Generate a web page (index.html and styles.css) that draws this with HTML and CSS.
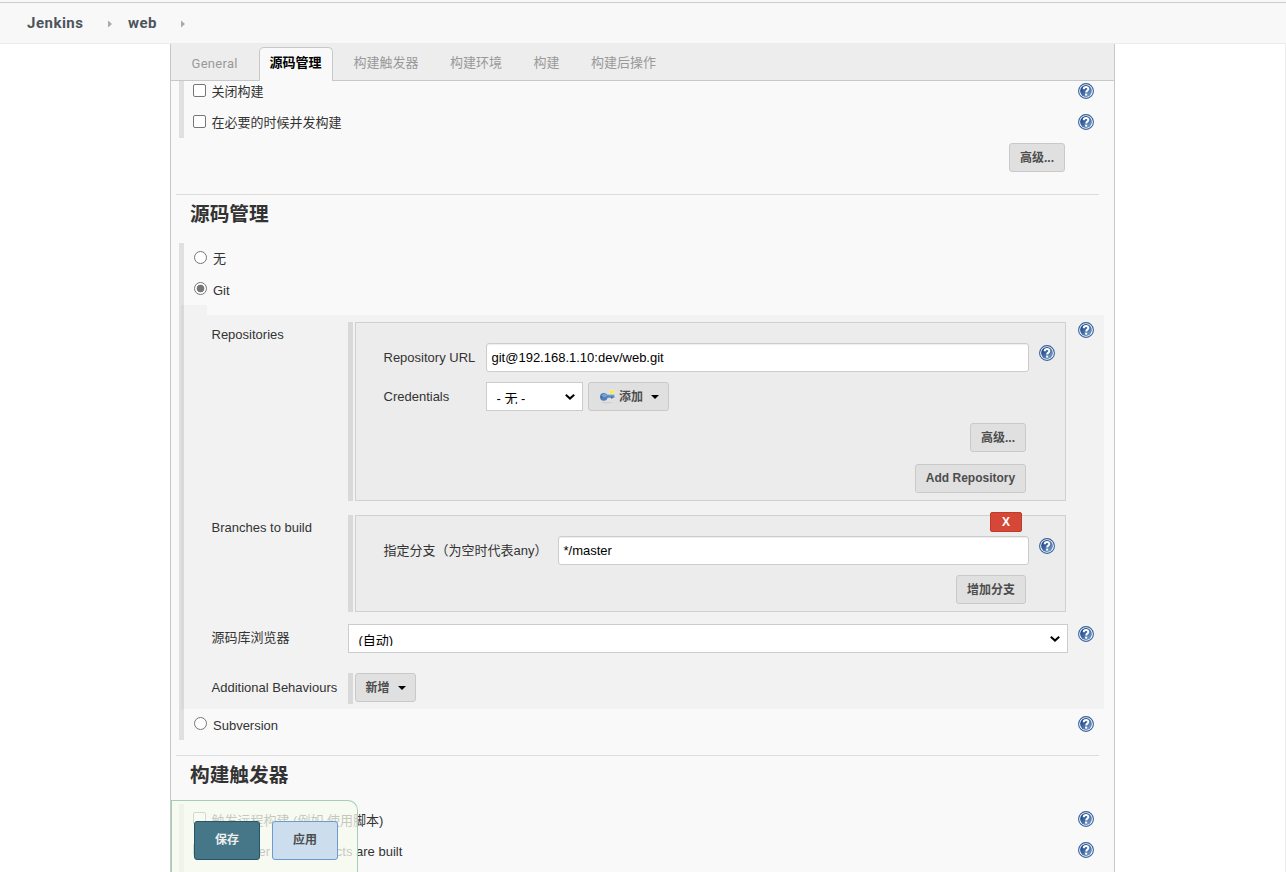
FILE: index.html
```html
<!DOCTYPE html>
<html lang="zh-CN">
<head>
<meta charset="utf-8">
<title>web Config [Jenkins]</title>
<link rel="stylesheet" href="styles.css">
</head>
<body>
<svg class="defs" width="0" height="0">
  <defs>
    <linearGradient id="blue" x1="0" y1="0" x2="1" y2="1"><stop offset="0.2" stop-color="#1f4c8a"/><stop offset="1" stop-color="#86a8d2"/></linearGradient>
    <symbol id="help" viewBox="0 0 16 16">
      <circle cx="8" cy="8" r="7.4" fill="#fff" stroke="#345f9c" stroke-width="1.1"/>
      <circle cx="8" cy="8" r="5.9" fill="url(#blue)"/>
      <path d="M5.7 6.2C5.8 3.2 10.4 3.3 10.3 6C10.2 7.6 8.2 7.7 8.2 9.6" fill="none" stroke="#fff" stroke-width="2"/>
      <rect x="7.1" y="10.6" width="2.1" height="2" fill="#fff"/>
    </symbol>
    <symbol id="chev" viewBox="0 0 10 6"><path d="M0.8 0.8L5 4.6L9.2 0.8" fill="none" stroke="#000" stroke-width="2"/></symbol>
    <symbol id="caret" viewBox="0 0 8 4"><path d="M0 0H8L4 4Z"/></symbol>
    <symbol id="crumb" viewBox="0 0 4 8"><path d="M0 0.5L4 4L0 7.5Z" fill="#aaa"/></symbol>
  </defs>
</svg>

<header class="crumbs">
  <a class="crumb-home">Jenkins</a>
  <svg class="sep"><use href="#crumb"/></svg>
  <a class="crumb-job">web</a>
  <svg class="sep sep-last"><use href="#crumb"/></svg>
</header>

<main class="page">
  <div class="panel">
    <nav class="tabs">
      <a class="tab">General</a>
      <a class="tab active">源码管理</a>
      <a class="tab">构建触发器</a>
      <a class="tab">构建环境</a>
      <a class="tab">构建</a>
      <a class="tab">构建后操作</a>
    </nav>

    <section class="block block-general">
      <div class="row"><span class="check"></span><label>关闭构建</label><svg class="help"><use href="#help"/></svg></div>
      <div class="row"><span class="check"></span><label>在必要的时候并发构建</label><svg class="help"><use href="#help"/></svg></div>
    </section>
    <div class="advanced"><button class="btn adv">高级...</button></div>

    <h2 class="title">源码管理</h2>
    <section class="block">
      <div class="row radio-row"><span class="radio"></span><label>无</label></div>
      <div class="row radio-row latin"><span class="radio on"></span><label>Git</label></div>
      <div class="nub"></div>
      <div class="git">
        <div class="field">
          <div class="name">Repositories</div>
          <div class="bar">
            <div class="box repo-box">
              <div class="line">
                <div class="key">Repository URL</div>
                <div class="input">git@192.168.1.10:dev/web.git</div>
                <svg class="help"><use href="#help"/></svg>
              </div>
              <div class="line cred">
                <div class="key">Credentials</div>
                <div class="select small"><span>- 无 -</span><svg><use href="#chev"/></svg></div>
                <button class="btn add">
                  <svg class="key-icon" viewBox="0 0 16 16">
                    <ellipse cx="8" cy="13.6" rx="5.5" ry="0.7" fill="#ccc"/>
                    <path d="M13 0.5V5.5M10.5 3H15.5" stroke="#fff27a" stroke-width="2.5"/>
                    <circle cx="12.8" cy="3" r="1.6" fill="#f7e64b"/>
                    <rect x="7" y="5.7" width="8.3" height="2.5" fill="#6a96cc"/>
                    <path d="M7 7.8H15.5V8.6H13.5V9.6H12V8.6H7Z" fill="#33659f"/>
                    <ellipse cx="4.8" cy="7.8" rx="3.8" ry="3.9" fill="#4f80bb"/>
                    <ellipse cx="5.5" cy="6.5" rx="2.5" ry="1.8" fill="#7aa3d4"/>
                    <circle cx="2.6" cy="8" r="0.8" fill="#315e9b"/>
                  </svg>
                  <span>添加</span><svg class="caret"><use href="#caret"/></svg>
                </button>
              </div>
              <div class="end first"><button class="btn adv">高级...</button></div>
              <div class="end second"><button class="btn add-repo">Add Repository</button></div>
            </div>
          </div>
          <svg class="help"><use href="#help"/></svg>
        </div>
        <div class="field branches">
          <div class="name">Branches to build</div>
          <div class="bar">
            <div class="box branch-box">
              <button class="delete">X</button>
              <div class="line">
                <div class="key wide">指定分支（为空时代表any）</div>
                <div class="input">*/master</div>
                <svg class="help"><use href="#help"/></svg>
              </div>
              <div class="end branch-end"><button class="btn add-branch">增加分支</button></div>
            </div>
          </div>
        </div>
        <div class="field browser">
          <div class="name">源码库浏览器</div>
          <div class="select"><span>(自动)</span><svg><use href="#chev"/></svg></div>
          <svg class="help"><use href="#help"/></svg>
        </div>
        <div class="field behaviours">
          <div class="name">Additional Behaviours</div>
          <div class="bar"><button class="btn new"><span>新增</span><svg class="caret"><use href="#caret"/></svg></button></div>
        </div>
      </div>
      <div class="row radio-row latin"><span class="radio"></span><label>Subversion</label><svg class="help"><use href="#help"/></svg></div>
    </section>

    <h2 class="title title-triggers">构建触发器</h2>
    <section class="block block-triggers">
      <div class="row latin"><span class="check"></span><label>触发远程构建 (例如,使用脚本)</label><svg class="help"><use href="#help"/></svg></div>
      <div class="row latin"><span class="check"></span><label>Build after other projects are built</label><svg class="help"><use href="#help"/></svg></div>
    </section>

    <div class="savebar">
      <button class="save">保存</button>
      <button class="apply">应用</button>
    </div>
  </div>
</main>
</body>
</html>
```
FILE: styles.css
```css
* { box-sizing: border-box; }
body {
  margin: 0;
  height: 872px;
  overflow: hidden;
  background: #fff;
  color: #333;
  font: 13px/20px "Liberation Sans", "Noto Sans CJK SC", sans-serif;
}
button { margin: 0; padding: 0; font-family: inherit; }
svg { display: block; flex: none; }
.defs { position: absolute; }

.crumbs {
  display: flex;
  align-items: center;
  height: 44px;
  padding: 2px 0 0 27px;
  background: linear-gradient(#f8f8f8 2px, #ccc 2px, #ccc 3px, #f8f8f8 3px);
  border-bottom: 1px solid #ececec;
  color: #4d545d;
  font: bold 15px/20px Roboto, sans-serif;
  letter-spacing: 0.5px;
}
.crumb-home { width: 81px; }
.crumb-job { width: 49px; margin-left: 15px; padding-left: 1px; }
.sep { width: 4px; height: 8px; margin-top: 2px; }
.sep-last { margin-left: 5px; }

.page { height: 828px; border-right: 1px solid #eee; }
.panel {
  position: relative;
  width: 945px;
  height: 100%;
  margin-left: 170px;
  overflow: hidden;
  background: #f9f9f9;
  border: solid #c8c8c8;
  border-width: 0 1px;
}

.tabs {
  display: flex;
  height: 37px;
  padding: 3px 0 0 10px;
  background: #ededed;
  border-bottom: 1px solid #c8c8c8;
  color: #999;
  font-family: Roboto, "Noto Sans CJK SC", sans-serif;
}
.tab { height: 34px; padding: 6px 11px 0 10.5px; margin-right: 10px; line-height: 19px; white-space: nowrap; }
.tab:first-child { width: 78px; margin-right: 0; padding: 7px 0 0 10.5px; letter-spacing: 0.3px; }
.tab.active {
  width: 74px;
  padding: 5px 0 0 9.5px;
  background: #f9f9f9;
  border: 1px solid #c8c8c8;
  border-bottom: 0;
  border-radius: 5px 5px 0 0;
  color: #000;
  font-weight: bold;
}

.block { margin: 0 10px 0 8px; border-left: 5px solid #e0e0e0; }
.block-general { height: 57px; overflow: hidden; }
.block-general .row:first-child { margin-top: -5px; }
.row { display: flex; height: 31px; padding: 6px 10px 0 9px; align-items: flex-start; }
.row label { flex: 1; margin-left: 5.5px; white-space: nowrap; }
.row.latin label { padding-top: 1px; }
.help { width: 16px; height: 16px; margin-top: 1px; }
.check, .radio { flex: none; width: 13px; height: 13px; margin-top: 2px; background: #fff; border: 1px solid #767676; border-radius: 2px; }
.radio { border-radius: 50%; }
.radio.on { background: radial-gradient(circle, #767676 3.5px, #fff 4.2px); }
.radio-row { padding-left: 10px; }
.radio-row label { margin-left: 6px; }

.btn {
  display: flex;
  align-items: center;
  justify-content: center;
  height: 29px;
  padding-bottom: 3px;
  background: #e0e0e0;
  border: 1px solid #c9c9c9;
  border-radius: 3px;
  color: #4d4d4d;
  font-size: 12px;
  font-weight: bold;
  white-space: nowrap;
}
.adv { width: 56px; }
.advanced { display: flex; justify-content: flex-end; height: 56px; padding: 5px 49px 0 0; }

.title {
  height: 49px;
  margin: 0 15px 0 5px;
  padding: 4px 0 0 14px;
  border-top: 1px solid #ddd;
  font-size: 19.7px;
  line-height: 31px;
}
.nub { width: 26px; height: 10px; margin-left: -3px; background: rgba(0, 0, 0, 0.028); }
.git { height: 394px; margin-left: -3px; padding: 7px 10px 0 30px; background: rgba(0, 0, 0, 0.028); }
.field { display: flex; align-items: flex-start; }
.name { width: 137px; padding: 3px 0 0 0.5px; white-space: nowrap; }
.bar { width: 718px; padding-left: 2px; border-left: 5px solid #d9d9d9; }
.field > .help { margin: 0 0 0 12px; }

.box { position: relative; width: 711px; background: #ececec; border: 1px solid #d0d0d0; padding: 20px 10px 0 28px; }
.repo-box { height: 179px; }
.branch-box { height: 97px; }
.line { display: flex; align-items: flex-start; }
.line .help { margin: 2px 0 0 10px; }
.key { width: 102px; padding-top: 5px; white-space: nowrap; }
.key.wide { width: 174px; }
.key { text-indent: -0.5px; }
.input {
  flex: 1;
  height: 29px;
  padding: 4px 5px 0 4.5px;
  background: #fff;
  border: 1px solid #ccc;
  border-radius: 3px;
  box-shadow: inset 0 1px 1px rgba(0, 0, 0, 0.07);
  color: #000;
}
.cred { margin-top: 10px; }
.select { display: flex; justify-content: space-between; width: 720px; height: 29px; background: #fff; border: 1px solid #ccc; color: #000; }
.select span { height: 15px; margin: 6px 0 0 9.5px; line-height: 20px; overflow: hidden; }
.select svg { width: 10px; height: 6px; margin: 11px 7px 0 0; }
.select.small { width: 97px; }
.add { width: 81px; margin-left: 5px; justify-content: flex-start; padding-left: 10px; }
.key-icon { width: 16px; height: 16px; margin: 3px 4px 0 0; }
.caret { width: 8px; height: 4px; margin: 4px 0 0 8px; }
.end { display: flex; justify-content: flex-end; margin-right: 29px; }
.first { margin-top: 12px; }
.second { margin-top: 12px; }
.add-repo { width: 111px; padding-bottom: 1px; }
.branches { margin-top: 14px; }
.delete {
  position: absolute;
  top: -4px;
  right: 43px;
  width: 32px;
  height: 20px;
  background: #d54837;
  border: 1px solid #c23a2b;
  border-radius: 2px;
  color: #fff;
  font: bold 12px/17px "Liberation Sans", sans-serif;
}
.branch-end { margin-top: 10px; }
.add-branch { width: 70px; }
.browser { margin-top: 12px; }
.browser > .name { padding-top: 4px; }
.browser > .help { margin: 2px 0 0 10px; }
.behaviours { margin-top: 20px; }
.behaviours > .name { padding-top: 5px; }
.behaviours .bar { height: 31px; }
.new { width: 61px; }

.title-triggers { margin-top: 15px; }
.block-triggers { height: 68px; }

.savebar {
  position: absolute;
  left: 0;
  bottom: 0;
  display: flex;
  gap: 12px;
  width: 187px;
  height: 72px;
  padding: 20px 0 0 22px;
  background: rgba(246, 249, 237, 0.75);
  border: solid #a6cdb7;
  border-width: 1px 1px 0;
  border-radius: 0 10px 0 0;
}
.savebar button { width: 66px; height: 39px; border-radius: 3px; padding-bottom: 4px; font-size: 12px; font-weight: bold; }
.save { background: #457788; border: 1px solid #285566; color: #eee; }
.apply { background: #ccdded; border: 1px solid #6b9ace; color: #4d4d4d; }
```
